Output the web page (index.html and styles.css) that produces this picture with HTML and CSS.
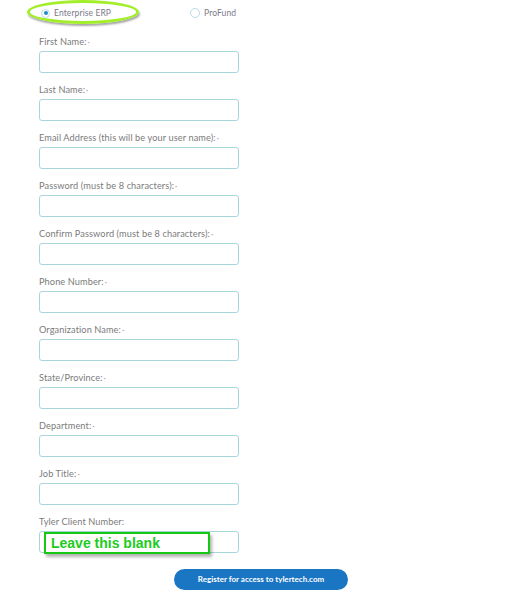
FILE: index.html
```html
<!DOCTYPE html>
<html>
<head>
<meta charset="utf-8">
<link rel="stylesheet" href="styles.css">
</head>
<body>
<form class="form">
  <div class="radios">
    <label class="radio"><span class="dot on"></span>Enterprise ERP</label>
    <label class="radio second"><span class="dot"></span>ProFund</label>
    <span class="ring"></span>
  </div>
  <div class="field"><div class="lbl">First Name:<i>·</i></div><div class="box"></div></div>
  <div class="field"><div class="lbl">Last Name:<i>·</i></div><div class="box"></div></div>
  <div class="field"><div class="lbl">Email Address (this will be your user name):<i>·</i></div><div class="box"></div></div>
  <div class="field"><div class="lbl">Password (must be 8 characters):<i>·</i></div><div class="box"></div></div>
  <div class="field"><div class="lbl">Confirm Password (must be 8 characters):<i>·</i></div><div class="box"></div></div>
  <div class="field"><div class="lbl">Phone Number:<i>·</i></div><div class="box"></div></div>
  <div class="field"><div class="lbl">Organization Name:<i>·</i></div><div class="box"></div></div>
  <div class="field"><div class="lbl">State/Province:<i>·</i></div><div class="box"></div></div>
  <div class="field"><div class="lbl">Department:<i>·</i></div><div class="box"></div></div>
  <div class="field"><div class="lbl">Job Title:<i>·</i></div><div class="box"></div></div>
  <div class="field last"><div class="lbl">Tyler Client Number:</div><div class="box"></div><span class="note">Leave this blank</span></div>
  <div class="actions"><span class="btn">Register for access to tylertech.com</span></div>
</form>
</body>
</html>
```
FILE: styles.css
```css
html, body { margin: 0; padding: 0; background: #fff; }
body { font-family: "Lato", "Liberation Sans", sans-serif; }
.form { padding-left: 39px; width: 473px; }
.radios { position: relative; height: 36px; display: flex; align-items: flex-start; padding-top: 7px; box-sizing: border-box; }
.radio { display: flex; align-items: center; font-size: 8.5px; color: #7a7a8a; line-height: 12px; margin-left: 2px; letter-spacing: 0.1px; }
.radio.second { margin-left: 79px; }
.dot { width: 7px; height: 7px; border: 1px solid #b9dde4; border-radius: 50%; margin-right: 4px; position: relative; box-sizing: content-box; }
.dot.on::after { content: ""; position: absolute; left: 1.5px; top: 1.5px; width: 4px; height: 4px; border-radius: 50%; background: #1e8bd0; }
.radio.second .dot { width: 8px; height: 8px; }
.ring { position: absolute; left: -12px; top: 0; width: 106px; height: 18px; border: 3px solid #a2ee2a; border-radius: 50%; box-shadow: 1px 2px 2px rgba(0,0,0,0.35); }
.field { position: relative; margin-bottom: 11px; }
.lbl { font-size: 9.2px; line-height: 12px; color: #7b7b7b; margin-bottom: 3px; white-space: nowrap; letter-spacing: 0.1px; }
.lbl i { font-style: normal; color: #c9a0a0; margin-left: 1px; }
.box { width: 200px; height: 22px; box-sizing: border-box; border: 1px solid #a6d6da; border-radius: 3px; background: #fff; }
.note { position: absolute; left: 5px; top: 16px; width: 166px; height: 22px; box-sizing: border-box; border: 2px solid #14c814; background: #fff; color: #1ccc1c; font-weight: bold; font-size: 14px; line-height: 18px; padding-left: 5px; box-shadow: 2px 3px 3px rgba(0,0,0,0.3); font-family: "Liberation Sans", sans-serif; }
.field.last { margin-bottom: 16px; }
.actions { display: flex; padding-left: 135px; }
.btn { width: 174px; height: 21px; border-radius: 11px; background: #1a76c3; color: #fff; font-size: 8px; font-weight: bold; line-height: 21px; text-align: center; }
```
